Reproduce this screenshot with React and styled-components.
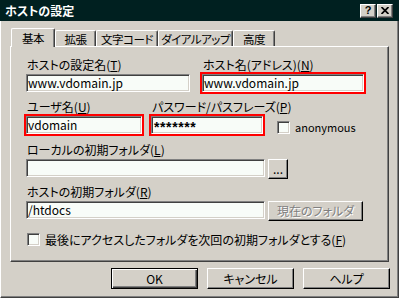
import React from "react";
import styled, { createGlobalStyle, css } from "styled-components";

const FACE = "#d4d0c8";

const GlobalStyle = createGlobalStyle`
  html, body {
    margin: 0;
    padding: 0;
    background: ${FACE};
  }
  body {
    font-family: "Noto Sans CJK JP", "Liberation Sans", sans-serif;
    font-size: 12px;
    color: #000;
  }
  * {
    box-sizing: border-box;
  }
`;

const raised = css`
  border: 1px solid;
  border-color: #ffffff #404040 #404040 #ffffff;
  box-shadow: inset -1px -1px #808080;
`;

const sunken = css`
  border: 1px solid;
  border-color: #808080 #ffffff #ffffff #808080;
  box-shadow: inset 1px 1px #404040, inset -1px -1px ${FACE};
`;

const Frame = styled.div`
  width: 399px;
  height: 298px;
  display: flex;
  flex-direction: column;
  background: ${FACE};
  font-feature-settings: "palt";
`;

const TitleBar = styled.div`
  height: 21px;
  flex: none;
  background: #002020;
  display: flex;
  align-items: center;
  gap: 1px;
  padding: 0 6px 0 5px;
`;

const Title = styled.div`
  flex: 1;
  color: #ffffff;
  font-weight: bold;
  font-size: 12px;
  line-height: 14px;
`;

const CaptionButton = styled.div`
  width: 16px;
  height: 14px;
  ${raised};
  background: ${FACE};
  display: flex;
  align-items: center;
  justify-content: center;
  font-family: "Liberation Sans", sans-serif;
  font-weight: bold;
  font-size: 11px;
  line-height: 11px;
`;

const Body = styled.div`
  flex: 1;
  display: flex;
  flex-direction: column;
  border-left: 1px solid #ffffff;
  border-right: 1px solid #404040;
  border-bottom: 1px solid #404040;
  box-shadow: inset -1px -1px #808080;
  padding: 7px 9px 8px 9px;
`;

const TabRow = styled.div`
  height: 18px;
  display: flex;
  align-items: flex-end;
  padding-left: 1px;
`;

const Tab = styled.div`
  width: ${(p) => p.w}px;
  height: ${(p) => (p.active ? 19 : 16)}px;
  margin-bottom: ${(p) => (p.active ? -1 : 0)}px;
  position: relative;
  z-index: ${(p) => (p.active ? 2 : 0)};
  background: ${FACE};
  border-top: 1px solid #ffffff;
  border-left: 1px solid #ffffff;
  border-right: 1px solid #404040;
  box-shadow: inset -1px 0 #808080;
  border-radius: 2px 2px 0 0;
  display: flex;
  justify-content: center;
  padding-top: ${(p) => (p.active ? 2 : 1)}px;
  font-size: 11.5px;
  line-height: 14px;
  white-space: nowrap;
  letter-spacing: -0.5px;
`;

const Panel = styled.div`
  height: 216px;
  flex: none;
  position: relative;
  z-index: 1;
  border-top: 1px solid #ffffff;
  border-left: 1px solid #ffffff;
  border-right: 1px solid #404040;
  border-bottom: 1px solid #404040;
  box-shadow: inset -1px -1px #808080;
  padding: 11px 0 0 15px;
  display: flex;
  flex-direction: column;
`;

const Row = styled.div`
  height: ${(p) => p.h}px;
  display: flex;
  align-items: flex-start;
`;

const Field = styled.div`
  width: ${(p) => p.w}px;
  margin-left: ${(p) => p.ml || 0}px;
  display: flex;
  flex-direction: column;
`;

const Label = styled.div`
  height: 16px;
  line-height: 14px;
  padding-left: 1px;
  white-space: nowrap;
`;

const Controls = styled.div`
  display: flex;
  align-items: flex-start;
  gap: 3px;
`;

const TextBox = styled.div`
  width: ${(p) => p.w || "100%"};
  height: 18px;
  flex: none;
  ${sunken};
  background: #f8fcf8;
  padding-left: 1px;
  line-height: 15px;
  font-size: 12px;
  white-space: nowrap;
  overflow: hidden;
  outline: ${(p) => (p.marked ? "2px solid #ff0000" : "none")};
`;

const Secret = styled.span`
  font-family: "Liberation Sans", sans-serif;
  font-weight: bold;
  font-size: 14px;
  letter-spacing: 0.6px;
  padding-left: 1px;
  position: relative;
  top: 2px;
`;

const SmallButton = styled.div`
  width: ${(p) => p.w}px;
  height: 20px;
  flex: none;
  ${raised};
  border-right-color: #000;
  border-bottom-color: #000;
  background: ${FACE};
  display: flex;
  align-items: center;
  justify-content: center;
  line-height: 14px;
  white-space: nowrap;
  color: ${(p) => (p.disabled ? "#808080" : "#000")};
  text-shadow: ${(p) => (p.disabled ? "1px 1px #ffffff" : "none")};
`;

const Check = styled.div`
  display: flex;
  align-items: center;
  gap: ${(p) => p.gap}px;
  margin-top: ${(p) => p.mt}px;
  margin-left: ${(p) => p.ml}px;
  font-size: ${(p) => p.fs}px;
  line-height: 13px;
  white-space: nowrap;
`;

const Box = styled.div`
  width: 13px;
  height: 13px;
  flex: none;
  ${sunken};
  background: #f8fcf8;
`;

const ButtonRow = styled.div`
  margin-top: 6px;
  margin-right: -1px;
  display: flex;
  justify-content: flex-end;
  gap: 9px;
`;

const DialogButton = styled.div`
  width: 87px;
  height: 21px;
  background: ${FACE};
  display: flex;
  align-items: center;
  justify-content: center;
  line-height: 14px;
  ${(p) =>
    p.isDefault
      ? css`
          border: 1px solid #000;
          box-shadow: inset 1px 1px #ffffff, inset -1px -1px #404040,
            inset -2px -2px #808080;
        `
      : css`
          ${raised};
          border-right-color: #000;
          border-bottom-color: #000;
        `}
`;

const tabs = [
  { label: "基本", w: 44, active: true },
  { label: "拡張", w: 41 },
  { label: "文字コード", w: 62 },
  { label: "ダイアルアップ", w: 75 },
  { label: "高度", w: 42 },
];

const App = () => {
  return (
    <Frame>
      <GlobalStyle />
      <TitleBar>
        <Title>ホストの設定</Title>
        <CaptionButton>?</CaptionButton>
        <CaptionButton>
          <svg width="8" height="7" viewBox="0 0 8 7">
            <path d="M0.5 0 L7.5 7 M7.5 0 L0.5 7" stroke="#000" strokeWidth="1.7" />
          </svg>
        </CaptionButton>
      </TitleBar>
      <Body>
        <TabRow>
          {tabs.map((t) => (
            <Tab key={t.label} w={t.w} active={t.active}>
              {t.label}
            </Tab>
          ))}
        </TabRow>
        <Panel>
          <Row h={42}>
            <Field w={164}>
              <Label>
                ホストの設定名(<u>T</u>)
              </Label>
              <TextBox>www.vdomain.jp</TextBox>
            </Field>
            <Field w={162} ml={12}>
              <Label>
                ホスト名(アドレス)(<u>N</u>)
              </Label>
              <TextBox marked>www.vdomain.jp</TextBox>
            </Field>
          </Row>
          <Row h={43}>
            <Field w={116}>
              <Label>
                ユーザ名(<u>U</u>)
              </Label>
              <TextBox marked>vdomain</TextBox>
            </Field>
            <Field w={112} ml={9}>
              <Label>
                パスワード/パスフレーズ(<u>P</u>)
              </Label>
              <TextBox marked>
                <Secret>*******</Secret>
              </TextBox>
            </Field>
            <Check mt={21} ml={14} gap={5} fs={11}>
              <Box />
              anonymous
            </Check>
          </Row>
          <Row h={42}>
            <Field w={262}>
              <Label>
                ローカルの初期フォルダ(<u>L</u>)
              </Label>
              <Controls>
                <TextBox w="239px" />
                <SmallButton w={20}>...</SmallButton>
              </Controls>
            </Field>
          </Row>
          <Row h={42}>
            <Field w={340}>
              <Label>
                ホストの初期フォルダ(<u>R</u>)
              </Label>
              <Controls>
                <TextBox w="239px">/htdocs</TextBox>
                <SmallButton w={95} disabled>
                  現在のフォルダ
                </SmallButton>
              </Controls>
            </Field>
          </Row>
          <Check mt={6} ml={1} gap={5} fs={12}>
            <Box />
            <span>
              最後にアクセスしたフォルダを次回の初期フォルダとする(<u>F</u>)
            </span>
          </Check>
        </Panel>
        <ButtonRow>
          <DialogButton isDefault>OK</DialogButton>
          <DialogButton>キャンセル</DialogButton>
          <DialogButton>ヘルプ</DialogButton>
        </ButtonRow>
      </Body>
    </Frame>
  );
};

export default App;
